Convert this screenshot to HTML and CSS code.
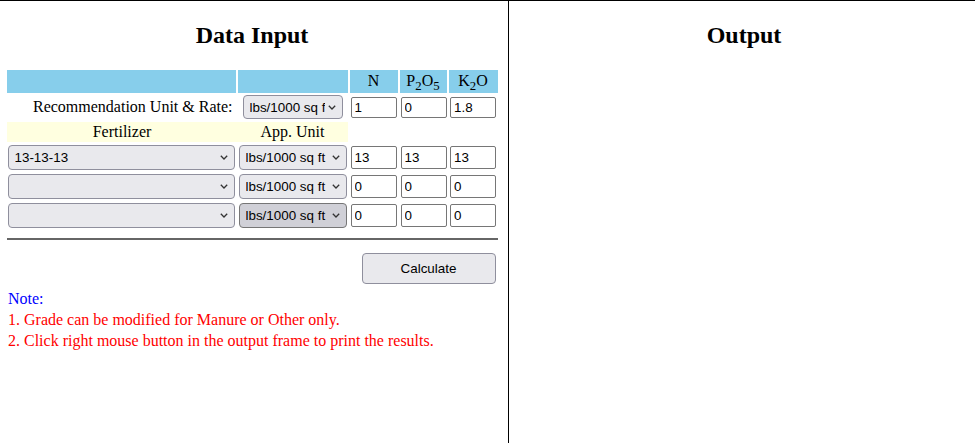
FILE: index.html
```html
<!DOCTYPE html>
<html>
<head>
<meta charset="utf-8">
<title>Fertilizer Calculator</title>
<link rel="stylesheet" href="styles.css">
</head>
<body>
<div class="frames">
  <div class="frame frame-left">
    <h2 class="title">Data Input</h2>
    <table class="grid">
      <colgroup>
        <col class="c1"><col class="c2"><col class="c3"><col class="c4"><col class="c5">
      </colgroup>
      <tr class="row-head">
        <th></th>
        <th></th>
        <th>N</th>
        <th>P<sub>2</sub>O<sub>5</sub></th>
        <th>K<sub>2</sub>O</th>
      </tr>
      <tr class="row-rate">
        <td class="label">Recommendation Unit &amp; Rate:</td>
        <td class="center">
          <span class="sel">
            <select class="select select-rate"><option>lbs/1000 sq ft</option></select>
            <svg class="chev" viewBox="0 0 8 5" width="8" height="5"><path d="M0.8 0.8 L4 4 L7.2 0.8" fill="none" stroke="#333" stroke-width="1.3"/></svg>
          </span>
        </td>
        <td><input class="num num-rate" type="text" value="1"></td>
        <td><input class="num num-rate" type="text" value="0"></td>
        <td><input class="num num-rate" type="text" value="1.8"></td>
      </tr>
      <tr class="row-sub">
        <td colspan="2" class="subhead">
          <div class="subhead-inner">
            <span class="sh1">Fertilizer</span>
            <span class="sh2">App. Unit</span>
          </div>
        </td>
        <td></td><td></td><td></td>
      </tr>
      <tr class="row-fert">
        <td>
          <span class="sel">
            <select class="select select-fert"><option>13-13-13</option></select>
            <svg class="chev" viewBox="0 0 8 5" width="8" height="5"><path d="M0.8 0.8 L4 4 L7.2 0.8" fill="none" stroke="#333" stroke-width="1.3"/></svg>
          </span>
        </td>
        <td>
          <span class="sel">
            <select class="select select-unit"><option>lbs/1000 sq ft</option></select>
            <svg class="chev" viewBox="0 0 8 5" width="8" height="5"><path d="M0.8 0.8 L4 4 L7.2 0.8" fill="none" stroke="#333" stroke-width="1.3"/></svg>
          </span>
        </td>
        <td><input class="num" type="text" value="13"></td>
        <td><input class="num" type="text" value="13"></td>
        <td><input class="num" type="text" value="13"></td>
      </tr>
      <tr class="row-fert">
        <td>
          <span class="sel">
            <select class="select select-fert"><option></option></select>
            <svg class="chev" viewBox="0 0 8 5" width="8" height="5"><path d="M0.8 0.8 L4 4 L7.2 0.8" fill="none" stroke="#333" stroke-width="1.3"/></svg>
          </span>
        </td>
        <td>
          <span class="sel">
            <select class="select select-unit"><option>lbs/1000 sq ft</option></select>
            <svg class="chev" viewBox="0 0 8 5" width="8" height="5"><path d="M0.8 0.8 L4 4 L7.2 0.8" fill="none" stroke="#333" stroke-width="1.3"/></svg>
          </span>
        </td>
        <td><input class="num" type="text" value="0"></td>
        <td><input class="num" type="text" value="0"></td>
        <td><input class="num" type="text" value="0"></td>
      </tr>
      <tr class="row-fert">
        <td>
          <span class="sel">
            <select class="select select-fert"><option></option></select>
            <svg class="chev" viewBox="0 0 8 5" width="8" height="5"><path d="M0.8 0.8 L4 4 L7.2 0.8" fill="none" stroke="#333" stroke-width="1.3"/></svg>
          </span>
        </td>
        <td>
          <span class="sel">
            <select class="select select-unit is-hover"><option>lbs/1000 sq ft</option></select>
            <svg class="chev" viewBox="0 0 8 5" width="8" height="5"><path d="M0.8 0.8 L4 4 L7.2 0.8" fill="none" stroke="#333" stroke-width="1.3"/></svg>
          </span>
        </td>
        <td><input class="num" type="text" value="0"></td>
        <td><input class="num" type="text" value="0"></td>
        <td><input class="num" type="text" value="0"></td>
      </tr>
      <tr class="row-rule">
        <td colspan="5"><hr class="rule"></td>
      </tr>
      <tr class="row-btn">
        <td colspan="2"></td>
        <td colspan="3" class="btn-cell"><button class="btn" type="button">Calculate</button></td>
      </tr>
    </table>
    <div class="notes">
      <div class="note-head">Note:</div>
      <div class="note-line">1. Grade can be modified for Manure or Other only.</div>
      <div class="note-line">2. Click right mouse button in the output frame to print the results.</div>
    </div>
  </div>
  <div class="frame frame-right">
    <h2 class="title">Output</h2>
  </div>
</div>
</body>
</html>
```
FILE: styles.css
```css
html, body {
  margin: 0;
  padding: 0;
  background: #fff;
}
body {
  font-family: "Liberation Serif", "Times New Roman", serif;
  font-size: 16px;
  color: #000;
}
.frames {
  display: flex;
  border-top: 1px solid #000;
  height: 442px;
}
.frame {
  box-sizing: border-box;
}
.frame-left {
  width: 509px;
  flex: none;
  border-right: 1px solid #000;
  padding-right: 4px;
}
.frame-right {
  flex: 1;
  padding-left: 4px;
}
.title {
  margin: 21px 0 18px;
  font-size: 24px;
  font-weight: bold;
  text-align: center;
  line-height: 27.6px;
}
.grid {
  margin: 0 auto;
  border-collapse: separate;
  border-spacing: 2px;
  table-layout: fixed;
  width: 495px;
}
.c1 { width: 229px; }
.c2 { width: 110px; }
.c3 { width: 48px; }
.c4 { width: 47px; }
.c5 { width: 49px; }
.grid th, .grid td {
  box-sizing: border-box;
  padding: 1px;
}
.row-head th {
  background: #87ceeb;
  height: 23px;
  padding: 0;
  font-weight: normal;
  text-align: center;
  line-height: 20px;
}
.row-head sub {
  font-size: 0.8em;
  line-height: 0;
  vertical-align: -4px;
}
.row-rate td {
  height: 25px;
  padding: 0 1px;
}
.label {
  text-align: right;
  white-space: nowrap;
  padding-right: 3px !important;
}
.center {
  text-align: center;
}
.row-sub td {
  height: 20px;
  padding: 0;
}
.subhead {
  background: #ffffe0;
}
.subhead-inner {
  display: flex;
  line-height: 20px;
}
.sh1 {
  width: 231px;
  text-align: center;
}
.sh2 {
  flex: 1;
  text-align: center;
}
.row-fert td {
  height: 27px;
  padding: 0 1px;
}
.sel {
  position: relative;
  display: inline-block;
  vertical-align: middle;
}
.select {
  appearance: none;
  -webkit-appearance: none;
  box-sizing: border-box;
  display: block;
  margin: 0;
  height: 25px;
  padding: 0 20px 0 6px;
  font-family: "Liberation Sans", Arial, sans-serif;
  font-size: 13.4px;
  color: #000;
  background: #e9e9ed;
  border: 1px solid #8f8f9d;
  border-radius: 4px;
  text-align: left;
}
.select-rate {
  width: 100px;
  height: 24px;
  padding-right: 17px;
}
.select-fert {
  width: 227px;
}
.select-unit {
  width: 108px;
}
.select.is-hover {
  background: #d0d0d7;
  border-color: #767676;
}
.chev {
  position: absolute;
  right: 7px;
  top: 50%;
  margin-top: -2px;
  pointer-events: none;
}
.num {
  box-sizing: border-box;
  display: block;
  margin: 0 auto;
  width: 46px;
  height: 23px;
  padding: 1px 3px;
  font-family: "Liberation Sans", Arial, sans-serif;
  font-size: 13.4px;
  color: #000;
  background: #fff;
  border: 1px solid #767676;
  border-radius: 2px;
}
.num-rate {
  height: 21px;
}
.row-rule td {
  padding: 0;
}
.rule {
  border: none;
  border-top: 2px solid #666;
  height: 0;
  margin: 7px 0 9px;
}
.row-btn td {
  padding: 0;
}
.btn-cell {
  text-align: right;
}
.btn {
  box-sizing: border-box;
  width: 134px;
  height: 31px;
  margin: 2px 2px 2px 0;
  font-family: "Liberation Sans", Arial, sans-serif;
  font-size: 13.4px;
  color: #000;
  background: #e9e9ed;
  border: 1px solid #8f8f9d;
  border-radius: 4px;
  vertical-align: top;
}
.notes {
  padding-left: 8px;
  line-height: 21px;
}
.note-head {
  color: #0000ff;
}
.note-line {
  color: #ff0000;
}
```
